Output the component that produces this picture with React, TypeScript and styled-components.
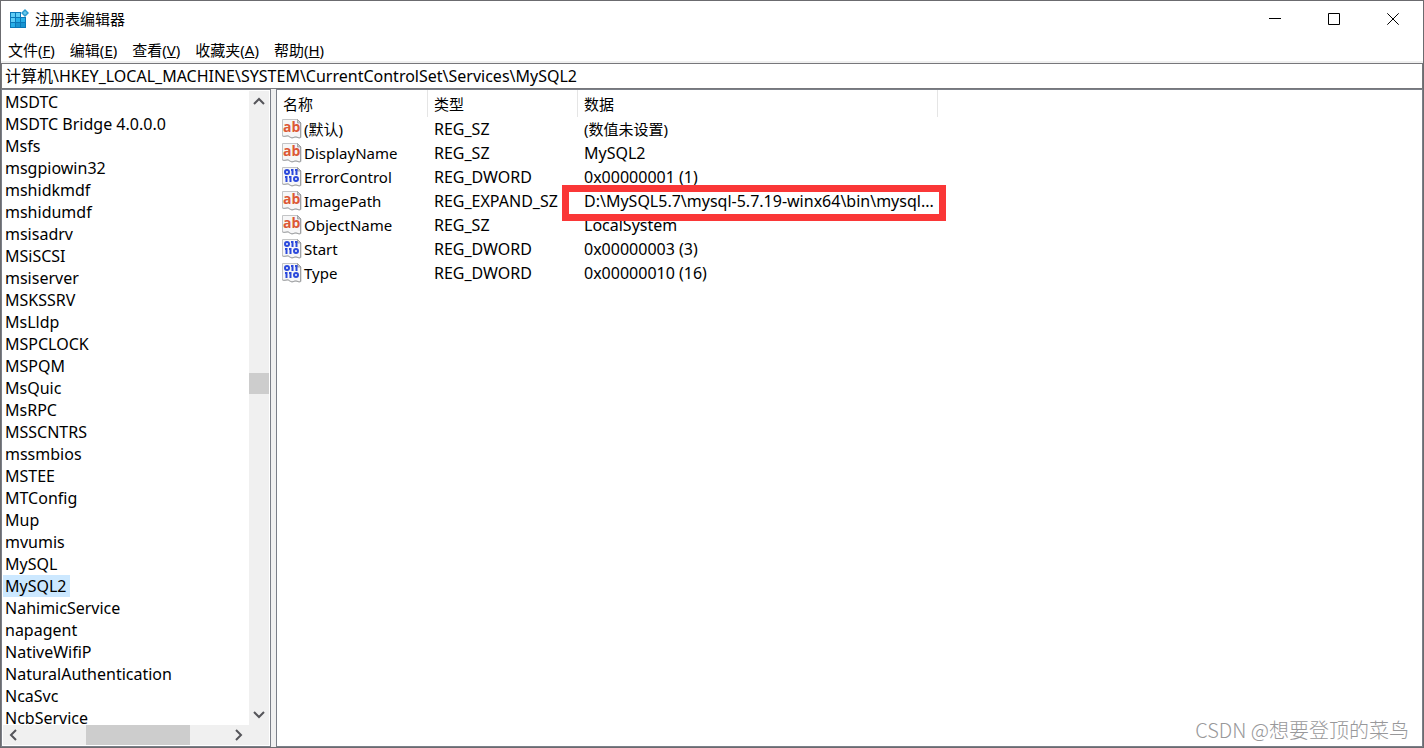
import React from "react";
import styled, { createGlobalStyle } from "styled-components";

const GlobalStyle = createGlobalStyle`
  * { box-sizing: border-box; }
  body {
    margin: 0;
    background: #fff;
    color: #000;
    font-family: "Noto Sans", "Noto Sans CJK SC", sans-serif;
    font-size: 15px;
    line-height: 22px;
  }
  button, input { font: inherit; color: inherit; }
  button { border: 0; padding: 0; background: none; }
`;

const Window = styled.div`
  position: relative;
  display: flex;
  flex-direction: column;
  height: 100vh;
  overflow: hidden;
  border: 1px solid #6b6b6f;
  background: #fff;
`;

const TitleBar = styled.header`
  display: flex;
  align-items: center;
  flex: none;
  height: 36px;
  padding: 0 1px 0 8px;
`;

const Title = styled.h1`
  flex: 1;
  margin: 0 0 0 6px;
  font-size: 15px;
  font-weight: 400;
`;

const CaptionButton = styled.button`
  display: grid;
  place-items: center;
  width: 59px;
  height: 36px;
`;

const MenuBar = styled.nav`
  display: flex;
  flex: none;
  gap: 15px;
  height: 26px;
  padding: 0 7px;
  border-bottom: 2px solid #f0f0f0;
`;

const MenuItem = styled.button`
  line-height: 26px;
  white-space: nowrap;
`;

const AddressInput = styled.input`
  display: block;
  flex: none;
  width: 100%;
  height: 26px;
  padding: 0 3px 2px;
  border: 1px solid #77777b;
  border-radius: 0;
  background: #fff;
  font-size: 16px;
  outline: 0;
`;

const Panes = styled.main`
  display: flex;
  flex: 1;
  min-height: 0;
  gap: 5px;
  background: #f0f0f0;
`;

const Pane = styled.section<{ $width?: string }>`
  display: flex;
  flex-direction: column;
  flex: ${(p) => (p.$width ? `0 0 ${p.$width}` : "1")};
  min-width: 0;
  padding: ${(p) => (p.$width ? "1px" : "0")};
  border: 1px solid #7b7f88;
  background: #fff;
`;

const TreeArea = styled.div`
  display: flex;
  flex: 1;
  min-height: 0;
`;

const Tree = styled.ul`
  flex: 1;
  margin: 0;
  padding: 0;
  overflow: hidden;
  list-style: none;
`;

const TreeItem = styled.li`
  display: flex;
  height: 22px;
`;

const TreeButton = styled.button<{ $selected: boolean }>`
  height: 22px;
  padding: 0 3px 0 2px;
  background: ${(p) => (p.$selected ? "#cce8ff" : "transparent")};
  font-size: 16px;
  line-height: 20px;
  white-space: nowrap;
`;

const ScrollBar = styled.div<{ $vertical?: boolean }>`
  display: flex;
  flex: none;
  flex-direction: ${(p) => (p.$vertical ? "column" : "row")};
  ${(p) => (p.$vertical ? "width: 20px;" : "height: 20px; padding-right: 20px;")}
  background: #f0f0f0;
`;

const ScrollArrow = styled.button`
  display: grid;
  place-items: center;
  flex: 0 0 22px;
`;

const Track = styled.div<{ $grow: number }>`
  flex: ${(p) => p.$grow} 1 0;
`;

const Thumb = styled.div<{ $vertical?: boolean }>`
  flex: 0 0 ${(p) => (p.$vertical ? "21px" : "104px")};
  background: #cdcdcd;
`;

const ValueTable = styled.table`
  width: 661px;
  table-layout: fixed;
  border-collapse: separate;
  border-spacing: 0;
`;

const HeadCell = styled.th<{ $width: number }>`
  width: ${(p) => p.$width}px;
  height: 27px;
  padding: 1px 6px 0;
  border-right: 1px solid #e5e5e5;
  font-weight: 400;
  text-align: left;
`;

const Cell = styled.td<{ $large?: boolean }>`
  position: relative;
  height: 24px;
  padding: 0 6px;
  font-size: ${(p) => (p.$large ? "16px" : "15px")};
  line-height: 24px;
  white-space: nowrap;
`;

const NameCell = styled.div`
  display: flex;
  align-items: center;
  gap: 2px;
  margin-left: -1px;
`;

const Highlight = styled.span`
  position: absolute;
  z-index: 1;
  inset: -4px -8px -8px -16px;
  border: 7px solid #fa3737;
  pointer-events: none;
`;

const Watermark = styled.div`
  position: absolute;
  right: 14px;
  bottom: 3px;
  color: #98989a;
  font-family: "Noto Sans CJK SC", sans-serif;
  font-size: 20px;
  font-weight: 300;
  line-height: 28px;
`;

const menus = [
  ["文件", "F"],
  ["编辑", "E"],
  ["查看", "V"],
  ["收藏夹", "A"],
  ["帮助", "H"],
];

const keys = [
  "MSDTC", "MSDTC Bridge 4.0.0.0", "Msfs", "msgpiowin32", "mshidkmdf", "mshidumdf",
  "msisadrv", "MSiSCSI", "msiserver", "MSKSSRV", "MsLldp", "MSPCLOCK", "MSPQM", "MsQuic",
  "MsRPC", "MSSCNTRS", "mssmbios", "MSTEE", "MTConfig", "Mup", "mvumis", "MySQL", "MySQL2",
  "NahimicService", "napagent", "NativeWifiP", "NaturalAuthentication", "NcaSvc", "NcbService",
];

interface RegistryValue {
  name: string;
  type: string;
  data?: string;
  marked?: boolean;
}

const values: RegistryValue[] = [
  { name: "(默认)", type: "REG_SZ" },
  { name: "DisplayName", type: "REG_SZ", data: "MySQL2" },
  { name: "ErrorControl", type: "REG_DWORD", data: "0x00000001 (1)" },
  { name: "ImagePath", type: "REG_EXPAND_SZ", data: "D:\\MySQL5.7\\mysql-5.7.19-winx64\\bin\\mysql...", marked: true },
  { name: "ObjectName", type: "REG_SZ", data: "LocalSystem" },
  { name: "Start", type: "REG_DWORD", data: "0x00000003 (3)" },
  { name: "Type", type: "REG_DWORD", data: "0x00000010 (16)" },
];

const RegeditIcon = () => (
  <svg width="20" height="20" viewBox="0 0 20 20" aria-hidden="true">
    <path d="M1 3h11v5h5v11H1z" fill="#0b78b8" />
    <path d="M2 4h4v4H2zM7 4h4v4H7zM2 9h4v4H2z" fill="#5fcdf5" />
    <path d="M7 9h4v4H7zM2 14h4v4H2zM12 9h4v4h-4z" fill="#27aee6" />
    <path d="M7 14h4v4H7zM12 14h4v4h-4z" fill="#1793d0" />
    <path d="M16 0l4 4-4 4-4-4z" fill="#2a9bd0" />
    <path d="M16 2l2 2-2 2-2-2z" fill="#67c7ea" />
  </svg>
);

const Sheet = () => (
  <>
    <path d="M.5 .5h15l3.500 3.500V18.500c-2 1-3-.5-5-.5s-3 1.500-5 .5-2-2-4-1.500-3 .5-4.500 0z" fill="#f6f6f7" stroke="#c3c4c6" />
    <path d="M15.500 .5v3.500h3.500z" fill="#c9cacc" stroke="#8f9193" strokeWidth=".7" />
    <path d="M18.500 4v14.500c-2 1-3-.5-5-.5s-3 1.500-5 .5-2-2-4-1.500-3 .5-4 0" fill="none" stroke="#a0a2a4" />
  </>
);

const StringIcon = () => (
  <svg width="20" height="20" viewBox="0 0 20 20" aria-hidden="true">
    <Sheet />
    <text x="1" y="13" fill="#dc5936" fontFamily="Open Sans, sans-serif" fontSize="14" fontWeight="700">
      ab
    </text>
  </svg>
);

const BinaryIcon = () => (
  <svg width="20" height="20" viewBox="0 0 20 20" aria-hidden="true">
    <Sheet />
    <g fill="none" stroke="#2b49dc" strokeWidth="2">
      <ellipse cx="5" cy="5" rx="2" ry="2" />
      <path d="M10.500 2v6M9 3h1.500M14.500 2v6M13 3h1.500" />
      <path d="M4.500 9v6M3 10h1.500M8.500 9v6M7 10h1.500" />
      <ellipse cx="14" cy="12" rx="2" ry="2" />
    </g>
  </svg>
);

const arrowPaths = {
  up: "M1 8l5-5 5 5",
  down: "M1 4l5 5 5-5",
  left: "M8 1L3 6l5 5",
  right: "M4 1l5 5-5 5",
};

const Arrow = ({ to }: { to: keyof typeof arrowPaths }) => (
  <ScrollArrow type="button" aria-label={`Scroll ${to}`}>
    <svg width="12" height="12" viewBox="0 0 12 12">
      <path d={arrowPaths[to]} fill="none" stroke="#55555a" strokeWidth="2" />
    </svg>
  </ScrollArrow>
);

const captionPaths = [
  ["Minimize", "M0 5.500h12"],
  ["Maximize", "M.5 .5h11v11H.5z"],
  ["Close", "M.3 .3l11.400 11.400M11.700 .3L.3 11.700"],
];

export default function App() {
  return (
    <Window>
      <GlobalStyle />
      <TitleBar>
        <RegeditIcon />
        <Title>注册表编辑器</Title>
        {captionPaths.map(([label, d]) => (
          <CaptionButton key={label} type="button" aria-label={label}>
            <svg width="12" height="12" viewBox="0 0 12 12">
              <path d={d} fill="none" stroke="#000" />
            </svg>
          </CaptionButton>
        ))}
      </TitleBar>
      <MenuBar>
        {menus.map(([label, key]) => (
          <MenuItem key={key} type="button">
            {label}(<u>{key}</u>)
          </MenuItem>
        ))}
      </MenuBar>
      <AddressInput
        aria-label="地址"
        defaultValue={"计算机\\HKEY_LOCAL_MACHINE\\SYSTEM\\CurrentControlSet\\Services\\MySQL2"}
      />
      <Panes>
        <Pane $width="270px">
          <TreeArea>
            <Tree>
              {keys.map((name) => (
                <TreeItem key={name}>
                  <TreeButton type="button" $selected={name === "MySQL2"}>{name}</TreeButton>
                </TreeItem>
              ))}
            </Tree>
            <ScrollBar $vertical>
              <Arrow to="up" />
              <Track $grow={260} />
              <Thumb $vertical />
              <Track $grow={309} />
              <Arrow to="down" />
            </ScrollBar>
          </TreeArea>
          <ScrollBar>
            <Arrow to="left" />
            <Track $grow={61} />
            <Thumb />
            <Track $grow={37} />
            <Arrow to="right" />
          </ScrollBar>
        </Pane>
        <Pane>
          <ValueTable>
            <thead>
              <tr>
                <HeadCell $width={151}>名称</HeadCell>
                <HeadCell $width={150}>类型</HeadCell>
                <HeadCell $width={360}>数据</HeadCell>
              </tr>
            </thead>
            <tbody>
              {values.map((value) => (
                <tr key={value.name}>
                  <Cell>
                    <NameCell>
                      {value.type === "REG_DWORD" ? <BinaryIcon /> : <StringIcon />}
                      {value.name}
                    </NameCell>
                  </Cell>
                  <Cell $large>{value.type}</Cell>
                  <Cell $large={value.data !== undefined}>
                    {value.data ?? "(数值未设置)"}
                    {value.marked && <Highlight />}
                  </Cell>
                </tr>
              ))}
            </tbody>
          </ValueTable>
        </Pane>
      </Panes>
      <Watermark>CSDN @想要登顶的菜鸟</Watermark>
    </Window>
  );
}
